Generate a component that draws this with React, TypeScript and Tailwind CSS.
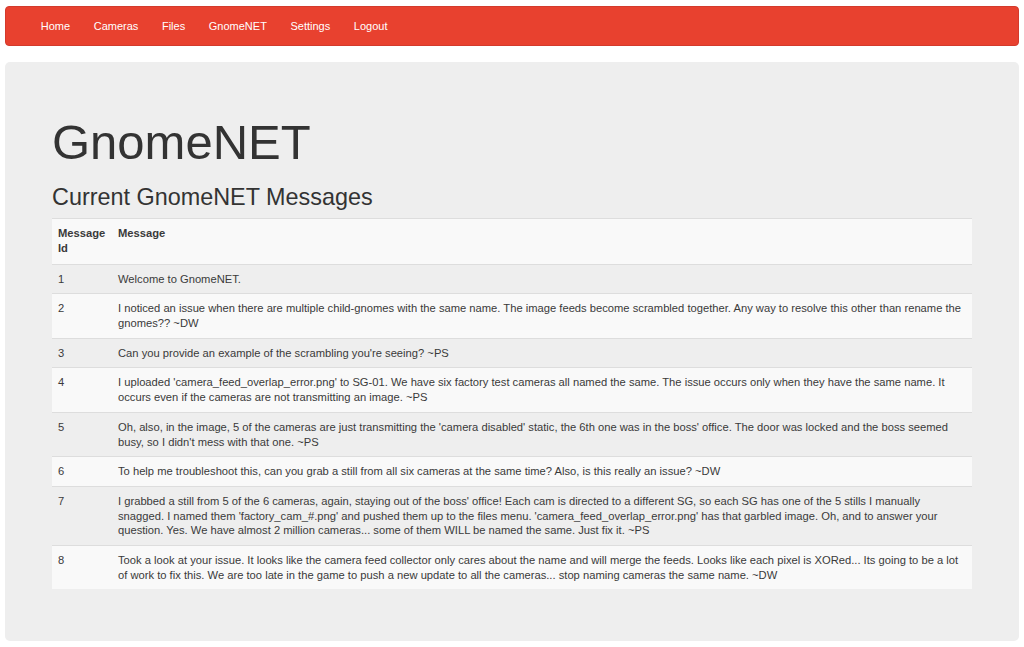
import React from "react"

const links = ["Home", "Cameras", "Files", "GnomeNET", "Settings", "Logout"]

const messages: [number, string][] = [
  [1, "Welcome to GnomeNET."],
  [
    2,
    "I noticed an issue when there are multiple child-gnomes with the same name. The image feeds become scrambled together. Any way to resolve this other than rename the gnomes?? ~DW",
  ],
  [3, "Can you provide an example of the scrambling you're seeing? ~PS"],
  [
    4,
    "I uploaded 'camera_feed_overlap_error.png' to SG-01. We have six factory test cameras all named the same. The issue occurs only when they have the same name. It occurs even if the cameras are not transmitting an image. ~PS",
  ],
  [
    5,
    "Oh, also, in the image, 5 of the cameras are just transmitting the 'camera disabled' static, the 6th one was in the boss' office. The door was locked and the boss seemed busy, so I didn't mess with that one. ~PS",
  ],
  [
    6,
    "To help me troubleshoot this, can you grab a still from all six cameras at the same time? Also, is this really an issue? ~DW",
  ],
  [
    7,
    "I grabbed a still from 5 of the 6 cameras, again, staying out of the boss' office! Each cam is directed to a different SG, so each SG has one of the 5 stills I manually snagged. I named them 'factory_cam_#.png' and pushed them up to the files menu. 'camera_feed_overlap_error.png' has that garbled image. Oh, and to answer your question. Yes. We have almost 2 million cameras... some of them WILL be named the same. Just fix it. ~PS",
  ],
  [
    8,
    "Took a look at your issue. It looks like the camera feed collector only cares about the name and will merge the feeds. Looks like each pixel is XORed... Its going to be a lot of work to fix this. We are too late in the game to push a new update to all the cameras... stop naming cameras the same name. ~DW",
  ],
]

const App: React.FC = () => {
  return (
    <div className="min-h-[647px] bg-white px-[5px] pt-[6px] pb-[7px] font-['Liberation_Sans',Arial,sans-serif] text-[#333]">
      <nav className="flex h-[40px] items-center rounded-[4px] border border-[#d33a2c] bg-[#e8412f] pl-[23px]">
        {links.map((l) => (
          <a key={l} href="#" className="px-[11.8px] pt-[1px] text-[11px] leading-[15px] text-white">
            {l}
          </a>
        ))}
      </nav>

      <div className="mt-[16px] rounded-[5px] bg-[#eeeeee] px-[47px] pt-[54px] pb-[52px]">
        <h1 className="text-[49px] leading-[1.1]">GnomeNET</h1>
        <h2 className="mt-[15px] text-[23.4px] leading-[1.1]">Current GnomeNET Messages</h2>

        <table className="mt-[7px] w-full border-collapse text-[11.2px] leading-[14.7px] text-[#3a3a3a]">
          <thead>
            <tr className="bg-[#f9f9f9]">
              <th className="w-[60px] border-t border-b border-[#dddddd] px-[6px] py-[7px] text-left align-top font-bold leading-[15.5px]">
                Message Id
              </th>
              <th className="border-t border-b border-[#dddddd] px-[6px] py-[7px] text-left align-top font-bold leading-[15.5px]">
                Message
              </th>
            </tr>
          </thead>
          <tbody>
            {messages.map(([id, text], i) => (
              <tr key={id} className={i % 2 === 1 ? "bg-[#f9f9f9]" : ""}>
                <td className={`px-[6px] py-[7px] align-top ${i > 0 ? "border-t border-[#dddddd]" : ""}`}>
                  {id}
                </td>
                <td className={`px-[6px] py-[7px] align-top ${i > 0 ? "border-t border-[#dddddd]" : ""}`}>
                  {text}
                </td>
              </tr>
            ))}
          </tbody>
        </table>
      </div>
    </div>
  )
}

export default App
